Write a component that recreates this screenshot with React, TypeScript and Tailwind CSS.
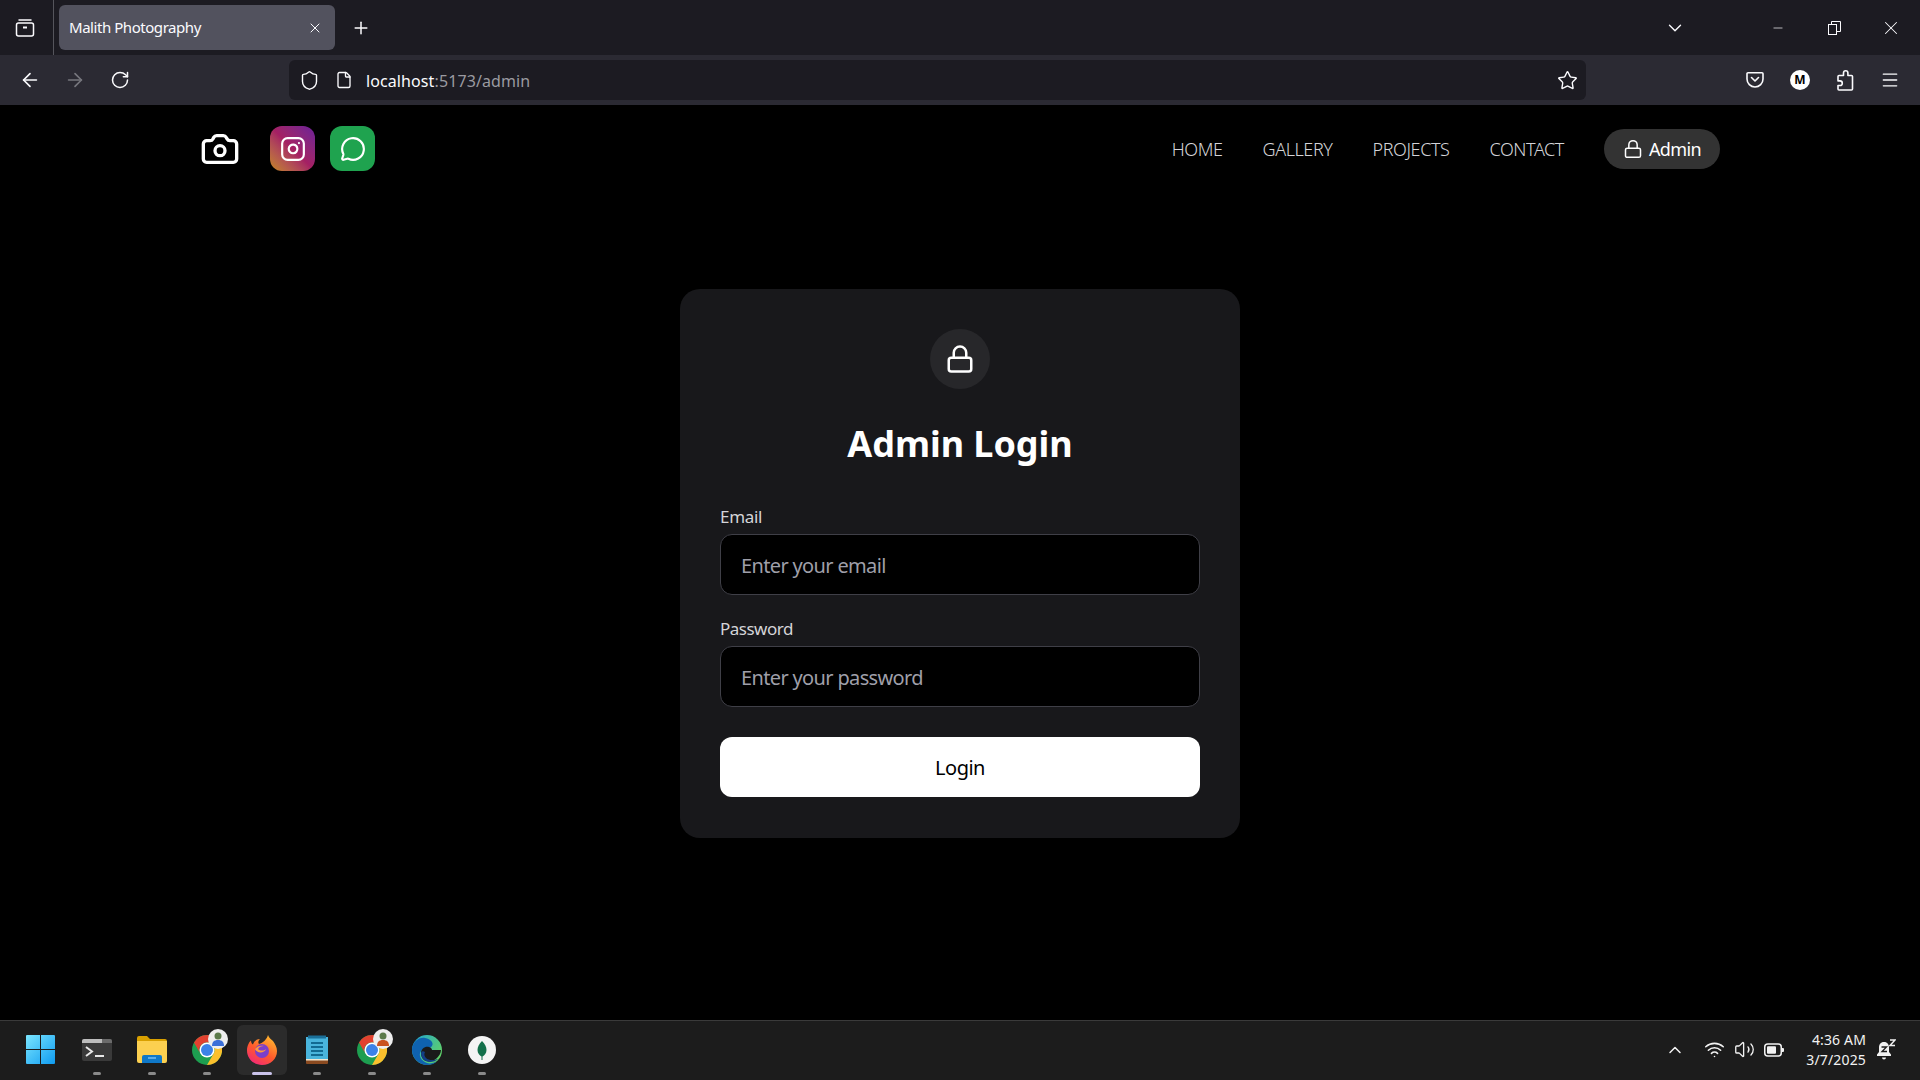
import { ArrowLeft, ArrowRight, Camera, ChevronDown, ChevronUp, File, Instagram, Lock, Menu, MessageCircle, Minus, Plus, RotateCw, Shield, Star, Volume2, Wifi, X } from "lucide-react";

const navLinks = ["HOME", "GALLERY", "PROJECTS", "CONTACT"];

function Windows() {
  return (
    <svg width="29" height="29" viewBox="0 0 29 29">
      <defs>
        <linearGradient id="win" x1="0" y1="0" x2="1" y2="1">
          <stop offset="0" stopColor="#7be6ff" />
          <stop offset="1" stopColor="#0f9bf0" />
        </linearGradient>
      </defs>
      <path d="M1 0h13v14H0V1a1 1 0 0 1 1-1zM15 0h13a1 1 0 0 1 1 1v13H15zM0 15h14v14H1a1 1 0 0 1-1-1zM15 15h14v13a1 1 0 0 1-1 1H15z" fill="url(#win)" />
    </svg>
  );
}

function Terminal() {
  return (
    <svg width="30" height="22" viewBox="0 0 30 22">
      <rect width="30" height="22" rx="2" fill="#3a3a3a" />
      <path d="M2 0h18v4H0V2a2 2 0 0 1 2-2z" fill="#bdbdbd" />
      <path d="M20 0h8a2 2 0 0 1 2 2v2H20z" fill="#6b6b6b" />
      <path d="M4 8l6 4.500L4 17" fill="none" stroke="#e8e8e8" strokeWidth="2" />
      <path d="M13 17h9" stroke="#e8e8e8" strokeWidth="2" />
    </svg>
  );
}

function Folder() {
  return (
    <svg width="30" height="27" viewBox="0 0 30 27">
      <path d="M0 2a2 2 0 0 1 2-2h8l3 3h15a2 2 0 0 1 2 2v4H0z" fill="#d9a000" />
      <path d="M0 5h30v20a2 2 0 0 1-2 2H2a2 2 0 0 1-2-2z" fill="#fcd050" />
      <path d="M5 21a2 2 0 0 1 2-2h16a2 2 0 0 1 2 2v6H5z" fill="#0f78c8" />
      <path d="M11 22h8" stroke="#8fd0ff" strokeWidth="1.200" />
    </svg>
  );
}

function Chrome({ badge }: { badge: string }) {
  return (
    <div className="relative h-[30px] w-[30px]">
      <svg width="30" height="30" viewBox="0 0 30 30">
        <circle cx="15" cy="15" r="15" fill="#1d9e50" />
        <path d="M15 0a15 15 0 0 1 13 7.500H15A7.500 7.500 0 0 0 8.500 19L2 7.500A15 15 0 0 1 15 0z" fill="#e2412f" />
        <path d="M28 7.500A15 15 0 0 1 15 30l6.500-11.200A7.500 7.500 0 0 0 15 7.500z" fill="#fbc02d" />
        <circle cx="15" cy="15" r="7.500" fill="#fff" />
        <circle cx="15" cy="15" r="6" fill="#3b82e8" />
      </svg>
      <div className="absolute -right-[6px] -top-[6px] flex h-5 w-5 items-center justify-center rounded-full bg-[#eeeeee]">
        <svg width="12" height="14" viewBox="0 0 12 14">
          <circle cx="6" cy="4" r="3.500" fill="#5b7a4a" />
          <path d="M0 14c0-4 2-6 6-6s6 2 6 6z" fill={badge} />
        </svg>
      </div>
    </div>
  );
}

function Firefox() {
  return (
    <svg width="30" height="30" viewBox="0 0 30 30">
      <defs>
        <linearGradient id="fx" x1="0.8" y1="0" x2="0.2" y2="1">
          <stop offset="0" stopColor="#ffbd2e" />
          <stop offset="0.55" stopColor="#ff5a2c" />
          <stop offset="1" stopColor="#f0257c" />
        </linearGradient>
      </defs>
      <path d="M15 30C6.500 30 0 23.500 0 15.500 0 11 2 7 4 5.500 4 8 5 9 6 9.500 7 6 10 4 13 4c-2 2-2 4-1 5 4-1 8-5 9-9 1 3 3 4 5 6 2 3 4 6 4 10 0 8-6.500 14-15 14z" fill="url(#fx)" />
      <circle cx="15" cy="16" r="7" fill="#7b3fc9" />
      <path d="M8 14c2-3 6-4 9-3-3 0-5 1-6 3 2 2 6 2 8 0-1 4-9 5-11 0z" fill="#ff9a3c" />
    </svg>
  );
}

function Notepad() {
  return (
    <svg width="22" height="29" viewBox="0 0 22 29">
      <rect y="2" width="22" height="25" fill="#49b4dc" />
      <path d="M0 25h22v3a1 1 0 0 1-1 1H1a1 1 0 0 1-1-1z" fill="#8a4a20" />
      <path d="M0 24h22v1.500H0z" fill="#f0e6d0" />
      <path d="M2 0.500h18v3H2z" fill="#1a6f98" />
      <path d="M5 8h12M5 12h12M5 16h12M5 20h12" stroke="#126a92" strokeWidth="1.800" />
    </svg>
  );
}

function Edge() {
  return (
    <svg width="30" height="30" viewBox="0 0 30 30">
      <defs>
        <linearGradient id="edgeA" x1="0" y1="0" x2="1" y2="0.6">
          <stop offset="0" stopColor="#1fa5d8" />
          <stop offset="1" stopColor="#5fd068" />
        </linearGradient>
      </defs>
      <circle cx="15" cy="15" r="15" fill="url(#edgeA)" />
      <path d="M0 15C0 7 7 2 13 3c6 1 9 5 7 8-2 3-8 2-11 5-3 4 0 10 6 12 3 1 7 0 10-2-3 3-6 4-10 4C7 30 0 23 0 15z" fill="#0f62b0" />
      <path d="M9 18c0-4 4-7 8-6 2 .5 3 2 3 3h9c0 3-2 6-4 8-3 3-8 4-11 3-3-1-5-4-5-8z" fill="#1a1a1a" />
      <path d="M9 18c0 5 4 9 9 9 3 0 6-1 8-3-3 1-9 2-12-1-2-2-2-4-1-6-2-1-3-1-4 1z" fill="#123f86" />
    </svg>
  );
}

function Mongo() {
  return (
    <svg width="28" height="28" viewBox="0 0 28 28">
      <circle cx="14" cy="14" r="14" fill="#f4f4f4" />
      <path d="M14 5c3 3 4.500 6 4.500 9 0 3-2 5.500-4 6.500V24h-1v-3.500c-2-1-4-3.500-4-6.500 0-3 1.500-6 4.500-9z" fill="#136f4a" />
    </svg>
  );
}

function Pocket() {
  return (
    <svg width="20" height="20" viewBox="0 0 20 20" fill="none" stroke="#fbfbfe" strokeWidth="1.600">
      <path d="M3 2.800h14a1 1 0 0 1 1 1V9a8 8 0 0 1-16 0V3.800a1 1 0 0 1 1-1z" />
      <path d="M6.500 7.500L10 11l3.500-3.500" strokeLinecap="round" strokeLinejoin="round" />
    </svg>
  );
}

function Extensions() {
  return (
    <svg width="20" height="22" viewBox="0 0 20 22" fill="none" stroke="#fbfbfe" strokeWidth="1.600">
      <path d="M8.500 4a2.200 2.200 0 0 1 4.400 0v2.500h3.600a1 1 0 0 1 1 1V20a1 1 0 0 1-1 1H4a1 1 0 0 1-1-1v-3.500h2a2.300 2.300 0 0 0 0-4.600H3V7.500a1 1 0 0 1 1-1h4.500z" strokeLinejoin="round" />
    </svg>
  );
}

function TabsIcon() {
  return (
    <svg width="20" height="20" viewBox="0 0 20 20" fill="none" stroke="#fbfbfe" strokeWidth="1.500">
      <rect x="1.500" y="5" width="17" height="13" rx="2" />
      <path d="M4 2h12" strokeLinecap="round" />
      <path d="M8 9.500h4" strokeWidth="2" />
    </svg>
  );
}

function Bell() {
  return (
    <svg width="20" height="22" viewBox="0 0 20 22" fill="#f2f2f2">
      <path d="M8 3c-3.500 0-5 2.500-5 5.500V13l-2 2.500V17h14v-1.500L13 13V8.500C13 5.500 11.500 3 8 3z" />
      <path d="M6 18.500h4a2 2 0 0 1-4 0z" />
      <path d="M5.500 8h5l-4.500 4.500h5" fill="none" stroke="#1c1c1c" strokeWidth="1.300" />
      <path d="M14 1h5l-5 5.500h5" fill="none" stroke="#f2f2f2" strokeWidth="1.500" />
    </svg>
  );
}

function Battery() {
  return (
    <svg width="20" height="14" viewBox="0 0 20 14">
      <rect x="0.750" y="1" width="16.500" height="12" rx="3" fill="none" stroke="#f2f2f2" strokeWidth="1.500" />
      <rect x="3" y="3.200" width="9" height="7.600" rx="1" fill="#f2f2f2" />
      <path d="M18 5h1a1 1 0 0 1 1 1v2a1 1 0 0 1-1 1h-1z" fill="#f2f2f2" />
    </svg>
  );
}

function TaskItem({ children, active, mark = true }: { children: React.ReactNode; active?: boolean; mark?: boolean }) {
  return (
    <div className={`relative mx-[2.500px] flex h-[50px] w-[50px] items-center justify-center rounded-md ${active ? "bg-[#2b2b2b]" : ""}`}>
      {children}
      {mark && !active && <span className="absolute bottom-0 h-[3px] w-2 rounded-full bg-[#8a8a8a]" />}
      {active && <span className="absolute bottom-0 h-[3px] w-5 rounded-full bg-[#c9c2ea]" />}
    </div>
  );
}

function Field({ label, placeholder, type, tracking }: { label: string; placeholder: string; type: string; tracking: string }) {
  return (
    <label className="flex flex-col">
      <span className={`mb-[5px] text-[17px] leading-[24px] text-zinc-300 ${tracking}`}>{label}</span>
      <input
        type={type}
        placeholder={placeholder}
        className="h-[61px] w-full rounded-xl border border-zinc-700 bg-black px-5 pt-[1px] text-[20px] tracking-[-0.65px] text-white outline-none placeholder:text-zinc-400"
      />
    </label>
  );
}

export default function App() {
  return (
    <div className="flex h-screen flex-col overflow-hidden bg-black font-['Noto_Sans','Open_Sans',sans-serif] text-white">
      {/* browser tab strip */}
      <div className="flex h-[55px] items-center bg-[#1c1b22]">
        <div className="flex h-full w-[54px] items-center justify-center border-r border-[#55555c] pr-[4px]">
          <TabsIcon />
        </div>
        <div className="ml-[5px] flex h-[45px] w-[276px] items-center justify-between rounded-md bg-[#52525e] pl-[10px] pr-[12px]">
          <span className="text-[15px] tracking-[-0.45px] text-[#fbfbfe]">Malith Photography</span>
          <X size={16} strokeWidth={1.500} className="text-[#fbfbfe]" />
        </div>
        <Plus size={20} strokeWidth={1.800} className="ml-[16px] text-[#fbfbfe]" />
        <div className="flex-1" />
        <ChevronDown size={22} strokeWidth={1.500} className="mr-[85px] text-[#fbfbfe]" />
        <Minus size={14} strokeWidth={1.200} className="mr-[43px] text-[#fbfbfe]" />
        <svg width="13" height="14" viewBox="0 0 13 14" fill="none" stroke="#fbfbfe" className="mr-[39px]">
          <rect x="0.500" y="3.500" width="8" height="10" />
          <path d="M3.500 3.500V0.500h9v10H8.500" />
        </svg>
        <X size={22} strokeWidth={1.100} className="mr-[18px] text-[#fbfbfe]" />
      </div>

      {/* browser toolbar */}
      <div className="flex h-[50px] items-center bg-[#2b2a33]">
        <ArrowLeft size={22} strokeWidth={1.800} className="ml-[19px] text-[#fbfbfe]" />
        <ArrowRight size={22} strokeWidth={1.800} className="ml-[23px] text-[#77777e]" />
        <RotateCw size={20} strokeWidth={1.800} className="ml-[24px] text-[#fbfbfe]" />
        <div className="ml-[159px] flex h-10 w-[1297px] items-center rounded-md bg-[#1c1b22] pl-[10px] pr-[8px]">
          <Shield size={21} strokeWidth={1.600} className="text-[#fbfbfe]" />
          <File size={18} strokeWidth={1.800} className="ml-[15px] text-[#fbfbfe]" />
          <span className="ml-[13px] mt-[2px] text-[16px] tracking-[0.1px] text-[#fbfbfe]">
            localhost<span className="text-[#9a9aa0]">:5173/admin</span>
          </span>
          <div className="flex-1" />
          <Star size={21} strokeWidth={1.600} className="text-[#fbfbfe]" />
        </div>
        <div className="ml-[159px]">
          <Pocket />
        </div>
        <div className="ml-[25px] flex h-5 w-5 items-center justify-center rounded-full bg-white text-[12px] font-bold text-black">M</div>
        <div className="ml-[25px]">
          <Extensions />
        </div>
        <Menu size={20} strokeWidth={1.600} className="ml-[25px] text-[#fbfbfe]" />
      </div>

      {/* site */}
      <div className="flex min-h-0 flex-1 flex-col">
        <nav className="mx-auto mt-[21px] flex h-[45px] w-[1520px] shrink-0 items-center justify-between">
          <div className="flex items-center gap-[30px]">
            <Camera size={40} strokeWidth={2} className="text-white" />
            <div className="flex items-center gap-[15px]">
              <div className="flex h-[45px] w-[45px] items-center justify-center rounded-xl bg-gradient-to-tr from-[#c4850f] via-[#a51f63] to-[#6c1d99]">
                <Instagram size={26} strokeWidth={2} className="text-white" />
              </div>
              <div className="flex h-[45px] w-[45px] items-center justify-center rounded-xl bg-[#1fa34f]">
                <MessageCircle size={26} strokeWidth={2} className="text-white" />
              </div>
            </div>
          </div>
          <div className="flex items-center gap-10">
            {navLinks.map((link) => (
              <a key={link} className="mt-[1px] text-[18px] font-light tracking-[-0.42px] text-zinc-300">
                {link}
              </a>
            ))}
            <button className="flex h-10 w-[116px] items-center justify-center gap-[6px] rounded-full bg-[#333333] text-[18px] tracking-[-0.6px] text-white">
              <Lock size={20} strokeWidth={1.800} />
              <span className="mt-[1px]">Admin</span>
            </button>
          </div>
        </nav>

        <main className="flex flex-1 justify-center pt-[118px]">
          <div className="h-[549px] w-[560px] rounded-[20px] bg-[#18181b] p-10">
            <div className="mx-auto flex h-[60px] w-[60px] items-center justify-center rounded-full bg-[#27272a]">
              <Lock size={30} strokeWidth={2} className="text-white" />
            </div>
            <h1 className="mt-[30px] text-center text-[36px] leading-[50px] font-bold tracking-[-0.05px]">Admin Login</h1>
            <div className="mt-[36px] flex flex-col gap-[22px]">
              <Field label="Email" placeholder="Enter your email" type="email" tracking="tracking-[-0.3px]" />
              <Field label="Password" placeholder="Enter your password" type="password" tracking="tracking-[-0.5px]" />
            </div>
            <button className="mt-[30px] h-[60px] w-full rounded-xl bg-white pt-[1px] text-[20px] tracking-[-0.5px] text-black">Login</button>
          </div>
        </main>
      </div>

      {/* windows taskbar */}
      <div className="flex h-[60px] shrink-0 items-center border-t border-[#3a3a3a] bg-[#1c1c1c] pb-[2px] pl-[13px]">
        <TaskItem mark={false}>
          <Windows />
        </TaskItem>
        <div className="ml-[1px]" />
        <TaskItem>
          <Terminal />
        </TaskItem>
        <TaskItem>
          <Folder />
        </TaskItem>
        <TaskItem>
          <Chrome badge="#3b6fd8" />
        </TaskItem>
        <TaskItem active>
          <Firefox />
        </TaskItem>
        <TaskItem>
          <Notepad />
        </TaskItem>
        <TaskItem>
          <Chrome badge="#c9521f" />
        </TaskItem>
        <TaskItem>
          <Edge />
        </TaskItem>
        <TaskItem>
          <Mongo />
        </TaskItem>
        <div className="flex-1" />
        <ChevronUp size={20} strokeWidth={1.800} className="text-[#f2f2f2]" />
        <Wifi size={21} strokeWidth={1.800} className="ml-[19px] text-[#f2f2f2]" />
        <Volume2 size={21} strokeWidth={1.500} className="ml-[9px] text-[#f2f2f2]" />
        <div className="ml-[9px]">
          <Battery />
        </div>
        <div className="ml-[22px] flex flex-col items-end text-[14px] leading-5 tracking-[0.15px] text-[#f2f2f2]">
          <span>4:36 AM</span>
          <span>3/7/2025</span>
        </div>
        <div className="ml-[10px] mr-[24px]">
          <Bell />
        </div>
      </div>
    </div>
  );
}
